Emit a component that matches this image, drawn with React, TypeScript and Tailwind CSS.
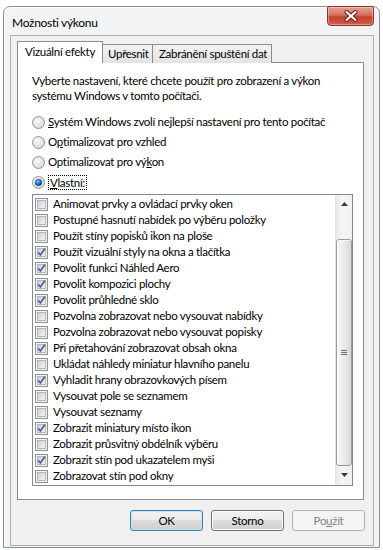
import React from "react";

const items: [string, boolean][] = [
  ["Animovat prvky a ovládací prvky oken", false],
  ["Postupné hasnutí nabídek po výběru položky", false],
  ["Použít stíny popisků ikon na ploše", false],
  ["Použít vizuální styly na okna a tlačítka", true],
  ["Povolit funkci Náhled Aero", true],
  ["Povolit kompozici plochy", true],
  ["Povolit průhledné sklo", true],
  ["Pozvolna zobrazovat nebo vysouvat nabídky", false],
  ["Pozvolna zobrazovat nebo vysouvat popisky", false],
  ["Při přetahování zobrazovat obsah okna", true],
  ["Ukládat náhledy miniatur hlavního panelu", false],
  ["Vyhladit hrany obrazovkových písem", true],
  ["Vysouvat pole se seznamem", false],
  ["Vysouvat seznamy", false],
  ["Zobrazit miniatury místo ikon", true],
  ["Zobrazit průsvitný obdélník výběru", false],
  ["Zobrazit stín pod ukazatelem myši", true],
  ["Zobrazovat stín pod okny", false],
];

function Radio({ on }: { on?: boolean }) {
  return (
    <svg width="13" height="13" viewBox="0 0 13 13" className="shrink-0">
      <defs>
        <radialGradient id="rb" cx="0.35" cy="0.3" r="0.8">
          <stop offset="0" stopColor="#ffffff" />
          <stop offset="1" stopColor="#cfd1d4" />
        </radialGradient>
        <radialGradient id="rdot" cx="0.4" cy="0.35" r="0.7">
          <stop offset="0" stopColor="#8fd0ff" />
          <stop offset="0.5" stopColor="#1f6fc9" />
          <stop offset="1" stopColor="#0b3b78" />
        </radialGradient>
      </defs>
      <circle cx="6.5" cy="6.5" r="6" fill="url(#rb)" stroke="#8e9094" />
      <circle cx="6.5" cy="6.5" r="4.2" fill="none" stroke="#e6e7e9" strokeWidth="1" />
      {on && <circle cx="6.5" cy="6.5" r="3.3" fill="url(#rdot)" stroke="#1b4f8f" strokeWidth="0.6" />}
    </svg>
  );
}

function Check({ on }: { on: boolean }) {
  return (
    <svg width="13" height="13" viewBox="0 0 13 13" className="shrink-0">
      <defs>
        <linearGradient id="cbg" x1="0" y1="0" x2="1" y2="1">
          <stop offset="0" stopColor="#cbcdd1" />
          <stop offset="1" stopColor="#f7f7f7" />
        </linearGradient>
      </defs>
      <rect x="0.5" y="0.5" width="12" height="12" fill="#f4f4f4" stroke="#8e8f8f" />
      <rect x="2.5" y="2.5" width="8" height="8" fill="url(#cbg)" stroke="#b3b6ba" />
      {on && (
        <path
          d="M3.2 6.4 L5.4 9 L9.9 2.6"
          fill="none"
          stroke="#4b5f9e"
          strokeWidth="1.7"
          strokeLinejoin="round"
        />
      )}
    </svg>
  );
}

function Arrow({ up }: { up?: boolean }) {
  return (
    <svg width="7" height="4" viewBox="0 0 7 4">
      <path d={up ? "M0 4 L3.5 0 L7 4 Z" : "M0 0 L7 0 L3.5 4 Z"} fill="#3a3a3a" />
    </svg>
  );
}

const btn =
  "flex h-[21px] w-[73px] items-center justify-center rounded-[3px] border text-[11.5px]";

export default function App() {
  return (
    <div className="h-[550px] w-[383px] bg-white pt-[6px] pl-[3px] font-['Lato',sans-serif] text-[11.5px] tracking-[-0.3px] text-black">
      <div className="relative flex h-[542px] w-[377px] flex-col rounded-t-[7px] border border-[#8a8d91] bg-[#f2f3f5] shadow-[inset_1px_1px_0_#ffffff]">
        {/* title bar */}
        <div className="flex h-[28px] items-center pl-[8px] pt-[4px] text-[12px]">
          Možnosti výkonu
        </div>
        <div className="absolute top-[-1px] right-[5px] flex h-[20px] w-[47px] items-center justify-center rounded-b-[4px] rounded-t-[2px] border border-[#8a3328] bg-[linear-gradient(to_bottom,#e8a093_0%,#d6705f_45%,#c2412d_55%,#d0604a_100%)] shadow-[inset_0_0_0_1px_rgba(255,255,255,0.35)]">
          <svg width="14" height="12" viewBox="0 0 14 12">
            <path d="M2.5 2 L11.5 10 M11.5 2 L2.5 10" stroke="#5a1b12" strokeWidth="4" strokeLinecap="round" />
            <path d="M2.5 2 L11.5 10 M11.5 2 L2.5 10" stroke="#ffffff" strokeWidth="2.2" strokeLinecap="round" />
          </svg>
        </div>

        {/* client area */}
        <div className="ml-[6px] flex h-[511px] w-[364px] flex-col border border-[#a9aeb4] bg-[#f0f0f0] pt-[6px] pl-[6px]">
          {/* tabs */}
          <div className="relative z-10 flex h-[21px] items-end whitespace-nowrap">
            <div className="flex h-[22px] w-[86px] items-center border border-b-0 border-[#898c95] bg-white pb-[1px] pl-[7px]">
              Vizuální efekty
            </div>
            <div className="-ml-px flex h-[19px] w-[51px] items-center border border-b-0 border-[#898c95] bg-[linear-gradient(to_bottom,#f3f3f3,#e3e3e3)] pl-[5px]">
              Upřesnit
            </div>
            <div className="-ml-px flex h-[19px] w-[120px] items-center border border-b-0 border-[#898c95] bg-[linear-gradient(to_bottom,#f3f3f3,#e3e3e3)] pl-[6px]">
              Zabránění spuštění dat
            </div>
          </div>

          {/* tab panel */}
          <div className="-mt-px flex h-[438px] w-[347px] flex-col border border-[#898c95] bg-white pt-[10px] pl-[14px]">
            <p className="w-[310px] leading-[15px]">
              Vyberte nastavení, které chcete použít pro zobrazení a výkon systému Windows v tomto počítači.
            </p>

            <div className="mt-[9px] flex flex-col">
              <label className="flex h-[20px] items-center gap-[3px]">
                <Radio />
                <span>
                  <u>S</u>ystém Windows zvolí nejlepší nastavení pro tento počítač
                </span>
              </label>
              <label className="flex h-[20px] items-center gap-[3px]">
                <Radio />
                <span>
                  O<u>p</u>timalizovat pro vzhled
                </span>
              </label>
              <label className="flex h-[20px] items-center gap-[3px]">
                <Radio />
                <span>
                  Optimalizovat pro vý<u>k</u>on
                </span>
              </label>
              <label className="flex h-[20px] items-center gap-[3px]">
                <Radio on />
                <span className="border border-dotted border-black px-px leading-[13px]">
                  <u>V</u>lastní:
                </span>
              </label>
            </div>

            {/* list box */}
            <div className="mt-[2px] flex h-[292px] w-[321px] border border-[#828790] bg-white">
              <div className="flex flex-1 flex-col py-[1px] pl-[2px]">
                {items.map(([label, on]) => (
                  <div key={label} className="flex h-[16px] items-center gap-[5px] whitespace-nowrap">
                    <Check on={on} />
                    <span>{label}</span>
                  </div>
                ))}
              </div>
              {/* scrollbar */}
              <div className="flex w-[17px] flex-col border-l border-[#e4e4e4] bg-[linear-gradient(to_right,#e9e9e9,#f5f5f5_40%,#f0f0f0)]">
                <div className="flex h-[17px] items-center justify-center">
                  <Arrow up />
                </div>
                <div className="h-[27px]" />
                <div className="flex h-[227px] items-center justify-center rounded-[3px] border border-[#9b9b9b] bg-[linear-gradient(to_right,#f7f7f7,#ececec_50%,#d6d6d6)] shadow-[inset_1px_1px_0_#ffffff]">
                  <div className="flex flex-col gap-[1px]">
                    <div className="h-px w-[6px] bg-[#6f6f6f]" />
                    <div className="h-px w-[6px] bg-[#6f6f6f]" />
                    <div className="h-px w-[6px] bg-[#6f6f6f]" />
                  </div>
                </div>
                <div className="flex h-[17px] items-center justify-center">
                  <Arrow />
                </div>
              </div>
            </div>
          </div>

          {/* buttons */}
          <div className="mt-[10px] flex w-[348px] justify-end gap-[8px]">
            <button className={`${btn} border-[#3c7fb1] bg-[linear-gradient(to_bottom,#f2f2f2_0%,#ebebeb_50%,#dddddd_50%,#cfcfcf_100%)] shadow-[inset_0_0_0_1px_#c4e5f6]`}>
              OK
            </button>
            <button className={`${btn} border-[#707070] bg-[linear-gradient(to_bottom,#f2f2f2_0%,#ebebeb_50%,#dddddd_50%,#cfcfcf_100%)] shadow-[inset_0_0_0_1px_#fcfcfc]`}>
              Storno
            </button>
            <button className={`${btn} border-[#adb2b5] bg-[#f4f4f4] text-[#838383]`}>
              Po<u>u</u>žít
            </button>
          </div>
        </div>
      </div>
    </div>
  );
}
